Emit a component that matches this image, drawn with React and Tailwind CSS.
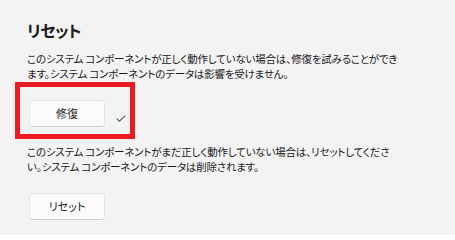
import React from 'react';

function WinButton({ label }) {
  return (
    <button className="w-[76px] h-[27px] ml-[2px] rounded-[4px] bg-[#fbfbfb] border border-[#e5e5e5] border-b-[#d0d0d0] text-[11px] text-[#1b1b1b] leading-none font-['Noto_Sans_CJK_JP',sans-serif] [font-feature-settings:'palt']">
      {label}
    </button>
  );
}

export default function App() {
  return (
    <div className="w-[455px] h-[235px] bg-[#f3f3f3] pl-[27px] pt-[18px] text-[#1a1a1a] overflow-hidden font-['Noto_Sans_CJK_JP','Noto_Sans',sans-serif] [font-feature-settings:'palt']">
      <h2 className='text-[16px] font-bold leading-[24px] tracking-[-0.5px]'>リセット</h2>
      <p className='mt-[9px] text-[10.5px] leading-[15px] tracking-[-0.2px] whitespace-nowrap'>
        このシステム コンポーネントが正しく動作していない場合は、修復を試みることができ<br />
        ます。システム コンポーネントのデータは影響を受けません。
      </p>

      <div className='relative flex items-start mt-[19px]'>
        <WinButton label='修復' />
        <svg className='ml-[11px] mt-[15px]' width='10' height='7' viewBox='0 0 10 7' fill='none'>
          <path d='M0.7 3.6 L3.4 6.2 L9.3 0.6' stroke='#5a5a5a' strokeWidth='1.1' />
        </svg>
        {/* red highlight box drawn over the button */}
        <div className='absolute left-[-12px] top-[-18px] w-[120px] h-[57px] border-[5px] border-[#ed1c24] pointer-events-none' />
      </div>

      <p className='mt-[17px] text-[10.5px] leading-[15px] tracking-[-0.2px] whitespace-nowrap'>
        このシステム コンポーネントがまだ正しく動作していない場合は、リセットしてくださ<br />
        い。システム コンポーネントのデータは削除されます。
      </p>

      <div className='mt-[19px] flex'>
        <WinButton label='リセット' />
      </div>
    </div>
  );
}
